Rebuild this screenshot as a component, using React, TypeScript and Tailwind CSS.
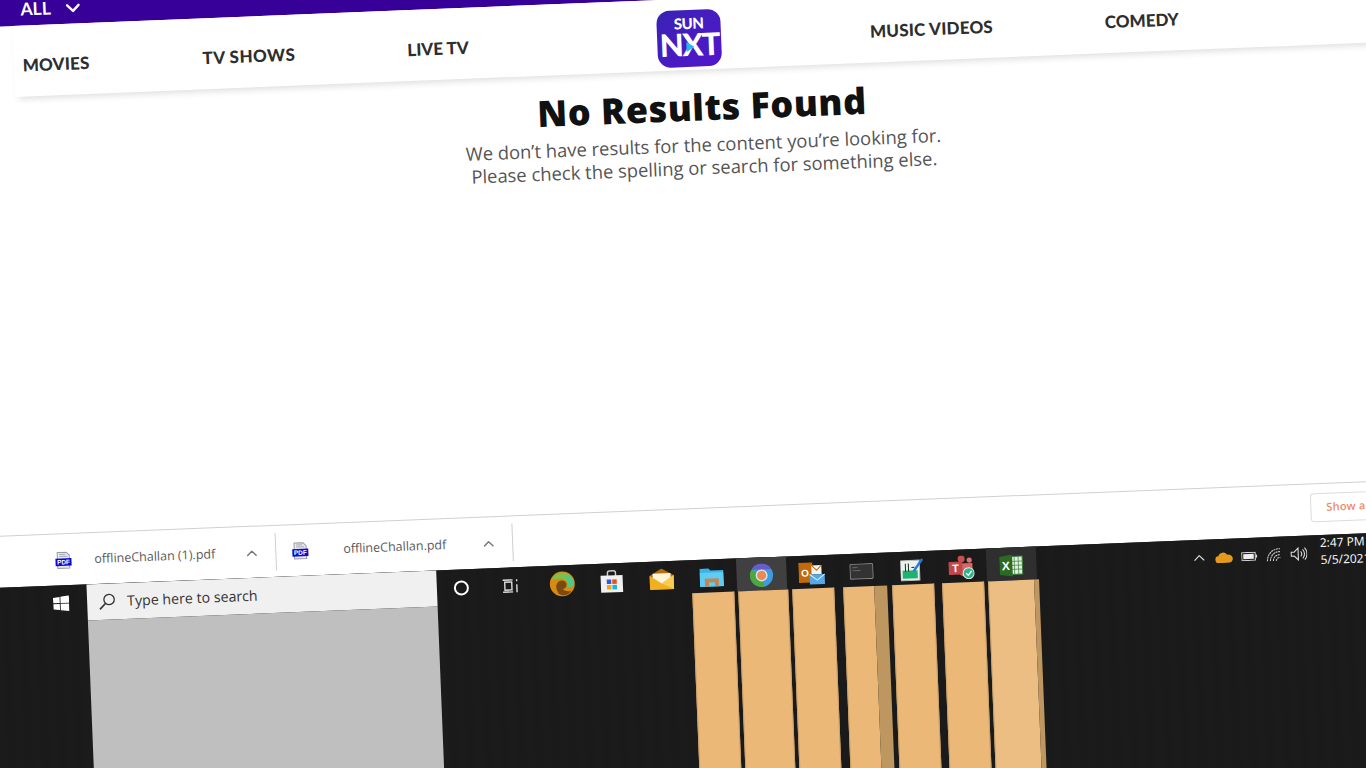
import { ChevronDown, ChevronUp } from 'lucide-react'

const lato = "font-['Lato','Liberation_Sans',sans-serif]"

function PdfIcon() {
  return (
    <svg width="18" height="18" viewBox="0 0 18 18">
      <path d="M3 1h9l3 3v13H3z" fill="#e8e8ee" stroke="#9a9aa8" />
      <path d="M5 3h6M5 5h8" stroke="#a8a8b4" />
      <rect x="1" y="7" width="16" height="7.5" fill="#0b0bd0" />
      <text x="9" y="13" textAnchor="middle" fontSize="6.4" fontWeight="700" fill="#fff" fontFamily="Liberation Sans, sans-serif">PDF</text>
    </svg>
  )
}

function DownloadItem({ name, textClass }: { name: string; textClass: string }) {
  return (
    <div className="flex items-center w-[237px] h-[38px] mt-[7px] border-r border-[#cfcfcf] shrink-0">
      <div className="ml-[15px] w-[18px] shrink-0"><PdfIcon /></div>
      <span className={`${textClass} text-[12.5px] text-[#5a5a5a] font-['Open_Sans',sans-serif] whitespace-nowrap`}>{name}</span>
      <ChevronUp size={17} strokeWidth={2} className="ml-[1px] text-[#777]" />
    </div>
  )
}

function TaskIcon({ children, active }: { children: React.ReactNode; active?: 'chrome' | 'excel' }) {
  const bg = active === 'chrome' ? 'bg-[#404040]' : active === 'excel' ? 'bg-[#2f2f2f]' : ''
  return <div className={`w-[50px] h-[33px] shrink-0 flex items-center justify-center pt-[3px] ${bg}`}>{children}</div>
}

export default function App() {
  return (
    <div className="w-[1366px] h-[768px] overflow-hidden bg-white">
      <div className="-ml-[40px] w-[1476px] h-[860px] origin-top-left rotate-[-2.29deg] flex flex-col bg-white">
        {/* site header */}
        <div className="h-[28px] bg-[#370098] flex items-center pl-[60px] pb-[4px] text-white shrink-0">
          <span className={`${lato} font-bold text-[17.5px]`}>ALL</span>
          <ChevronDown size={23} strokeWidth={2.5} className="ml-[11px]" />
        </div>
        <div className={`${lato} h-[71px] ml-[51px] pl-[9px] pt-[8px] shrink-0 flex items-center bg-white shadow-[0_6px_7px_-4px_rgba(0,0,0,0.14)] text-[#2e2e2e] font-black text-[17px] tracking-[0.2px] whitespace-nowrap`}>
          <span className="w-[180px]">MOVIES</span>
          <span className="w-[205px] tracking-[0.5px]">TV SHOWS</span>
          <span className="w-[250px] tracking-[0px]">LIVE TV</span>
          <div className="relative w-[64px] h-[57px] -mt-[1px] rounded-[13px] bg-gradient-to-br from-[#3a22b4] to-[#5214cc] flex flex-col items-center justify-center text-white leading-none overflow-hidden">
            <span className="text-[15px] font-black tracking-[-0.5px] -mb-[2px]">SUN</span>
            <span className="text-[31px] font-black tracking-[-1.5px]">NXT</span>
            <svg className="absolute left-[28px] top-[32px]" width="9" height="10" viewBox="0 0 9 10"><path d="M1 0l8 5-8 5z" fill="#22b8f0" /></svg>
          </div>
          <span className="ml-[149px] w-[235px] text-[17px]">MUSIC VIDEOS</span>
          <span className="tracking-[0px]">COMEDY</span>
        </div>

        {/* empty result */}
        <div className="h-[438px] shrink-0 pr-[2px] text-center font-['Open_Sans',sans-serif]">
          <h1 className="mt-[16px] text-[36px] leading-[44px] font-extrabold tracking-[0.5px] text-[#111]">No Results Found</h1>
          <p className="mt-[3px] text-[18.4px] leading-[23px] text-[#555]">
            We don’t have results for the content you’re looking for.<br />
            Please check the spelling or search for something else.
          </p>
        </div>

        {/* chrome downloads bar */}
        <div className="h-[52px] shrink-0 bg-white border-t border-[#d0d0d0] flex pl-[57px]">
          <DownloadItem name="offlineChallan (1).pdf" textClass="ml-[22px] w-[148px]" />
          <DownloadItem name="offlineChallan.pdf" textClass="ml-[34px] w-[136px]" />
          <div className="ml-[798px] mt-[9px] w-[120px] h-[29px] rounded-[4px] border border-[#dcdcdc] pl-[15px] flex items-center text-[11px] font-semibold tracking-[0.2px] text-[#ee8a66] font-['Open_Sans',sans-serif] whitespace-nowrap">Show all</div>
        </div>

        {/* windows taskbar */}
        <div className="flex-1 flex bg-[#1a1a1a] bg-[repeating-linear-gradient(90deg,#1a1a1a_0px,#1a1a1a_9px,#1b1b1b_9px,#1b1b1b_17px)]">
          <div className="w-[103px] shrink-0 flex justify-end pr-[18px] pt-[10px]">
            <svg width="16" height="16" viewBox="0 0 16 16" fill="#fff">
              <path d="M0 2.3L6.6 1.4V7.6H0zM7.4 1.3L16 0V7.6H7.4zM0 8.4H6.6V14.6L0 13.7zM7.4 8.4H16V16L7.4 14.7z" />
            </svg>
          </div>
          <div className="w-[350px] shrink-0 flex flex-col">
            <div className="h-[36px] bg-[#f0f0f0] flex items-center pl-[11px] pb-[1px] text-[#333]">
              <svg width="18" height="18" viewBox="0 0 18 18" fill="none" stroke="#333" strokeWidth="1.3">
                <circle cx="11" cy="7" r="5.2" />
                <path d="M7.2 10.8L1.5 16.5" strokeWidth="1.6" />
              </svg>
              <span className="ml-[11px] text-[14.2px] font-['Open_Sans',sans-serif] whitespace-nowrap">Type here to search</span>
            </div>
            <div className="flex-1 bg-[#bfbfbf]" />
          </div>
          <div className="flex-1 flex flex-col min-w-0 -ml-[1px]">
            <div className="h-[33px] flex shrink-0">
              <TaskIcon><div className="w-[15px] h-[15px] rounded-full border-[2.5px] border-white" /></TaskIcon>
              <TaskIcon>
                <svg width="18" height="15" viewBox="0 0 18 15" fill="none" stroke="#ddd" strokeWidth="1.4">
                  <path d="M1 1.5h10M1 13.5h10M3 3.5h7v8H3zM15 1v2M15 6v8" />
                </svg>
              </TaskIcon>
              <div className="w-[1px] shrink-0" />
              <TaskIcon>
                <svg width="27" height="27" viewBox="0 0 26 26">
                  <circle cx="13" cy="13" r="12" fill="#d98a12" />
                  <path d="M3 9a11 11 0 0 1 21 2c1 5-3 6-6 5 2-4-2-8-7-8-3 0-6 0-8 1z" fill="#7cc24a" />
                  <path d="M16 5a11 11 0 0 1 8 6c1 5-3 6-6 5 1-4-1-8-2-11z" fill="#4cc98a" />
                  <path d="M7 16c0-5 5-8 9-5 2 2 1 7-3 7 3 3 8 3 9 1-3 6-10 6-13 3-1-2-2-4-2-6z" fill="#7a4a10" />
                </svg>
              </TaskIcon>
              <TaskIcon>
                <svg width="24" height="24" viewBox="0 0 24 24">
                  <path d="M8 7V3.5C8 2 9 1.5 10 1.5h4c1 0 2 .5 2 2V7" fill="none" stroke="#ccc" strokeWidth="1.5" />
                  <rect x="1" y="6" width="22" height="17" fill="#f0f0f0" />
                  <rect x="7" y="10" width="4.5" height="4.5" fill="#2a5ce8" />
                  <rect x="12.5" y="10" width="4.5" height="4.5" fill="#e8501e" />
                  <rect x="7" y="15.5" width="4.5" height="4.5" fill="#f0a818" />
                  <rect x="12.5" y="15.5" width="4.5" height="4.5" fill="#18b8d8" />
                </svg>
              </TaskIcon>
              <TaskIcon>
                <svg width="26" height="22" viewBox="0 0 26 22">
                  <path d="M1 7L13 0l12 7v14H1z" fill="#b86c10" />
                  <path d="M4 5h18v6l-9 5-9-5z" fill="#fff4d8" />
                  <path d="M1 7l12 8 12-8v14H1z" fill="#f0b020" />
                  <path d="M13 15l12-8v14z" fill="#f8cc50" />
                </svg>
              </TaskIcon>
              <TaskIcon>
                <svg width="24" height="20" viewBox="0 0 24 20">
                  <path d="M0 1h9l2 2h13v16H0z" fill="#38b4e8" />
                  <path d="M0 5h24v14H0z" fill="#60ccf4" />
                  <path d="M5 19v-8h14v8h-4v-4H9v4z" fill="#c08850" />
                </svg>
              </TaskIcon>
              <TaskIcon active="chrome">
                <svg width="24" height="24" viewBox="0 0 24 24">
                  <circle cx="12" cy="12" r="11.5" fill="#3d9be0" />
                  <path d="M2 6a11.5 11.5 0 0 0 12 17.3L12 12z" fill="#4fa63a" />
                  <path d="M2 6a11.5 11.5 0 0 1 20 0H12z" fill="#6a5cc8" />
                  <circle cx="12" cy="12" r="6" fill="#d8e4f0" />
                  <circle cx="12" cy="12" r="4.6" fill="#ec8a50" />
                </svg>
              </TaskIcon>
              <TaskIcon>
                <svg width="27" height="24" viewBox="0 0 27 24">
                  <rect x="0" y="1" width="14" height="20" fill="#c26a08" />
                  <rect x="13" y="4" width="10" height="9" fill="#f4f4f4" />
                  <path d="M13 4l5 5 5-5" fill="none" stroke="#c26a08" />
                  <text x="6.5" y="15" textAnchor="middle" fontSize="10" fontWeight="700" fill="#fff" fontFamily="Liberation Sans, sans-serif">O</text>
                  <rect x="11" y="13" width="15" height="10" fill="#58a8e8" />
                  <path d="M11 13l7.5 6 7.5-6" fill="none" stroke="#d8eefc" />
                </svg>
              </TaskIcon>
              <TaskIcon>
                <svg width="24" height="16" viewBox="0 0 24 16">
                  <rect x=".5" y=".5" width="23" height="15" rx="1.5" fill="#333" stroke="#8c8c8c" />
                  <path d="M3 4h5M3 7h8" stroke="#666" />
                </svg>
              </TaskIcon>
              <TaskIcon>
                <svg width="23" height="23" viewBox="0 0 23 23">
                  <rect x="0" y="2" width="19" height="20" fill="#e8f4ec" stroke="#bbb" />
                  <path d="M2 12h15v8H2z" fill="#20b070" />
                  <path d="M5 5v8M8 5v8M11 9h3" stroke="#222" />
                  <path d="M13 13L22 1" stroke="#2878d8" strokeWidth="2.5" />
                </svg>
              </TaskIcon>
              <TaskIcon>
                <svg width="26" height="24" viewBox="0 0 26 24">
                  <circle cx="13" cy="3.5" r="3.5" fill="#c85050" />
                  <circle cx="21" cy="5" r="2.6" fill="#e07070" />
                  <path d="M10 8h14v7c0 4-4 6-8 6s-6-3-6-6z" fill="#d86868" />
                  <rect x="0" y="6" width="14" height="13" rx="1" fill="#c04848" />
                  <text x="7" y="16.5" textAnchor="middle" fontSize="11" fontWeight="700" fill="#fff" fontFamily="Liberation Sans, sans-serif">T</text>
                  <circle cx="20" cy="18" r="5.5" fill="#2fb48c" stroke="#e8e8e8" />
                  <path d="M17.5 18l2 2 3.5-4" fill="none" stroke="#fff" strokeWidth="1.4" />
                </svg>
              </TaskIcon>
              <TaskIcon active="excel">
                <svg width="24" height="22" viewBox="0 0 24 22">
                  <rect x="9" y="2" width="14" height="18" fill="#e4efe4" stroke="#3a7a3a" />
                  <path d="M15 2v18M19 2v18M9 7h14M9 11h14M9 15h14" stroke="#4a8a4a" strokeWidth=".8" />
                  <path d="M0 2L13 0v22L0 20z" fill="#2a6a22" />
                  <text x="6.5" y="15.5" textAnchor="middle" fontSize="12" fontWeight="700" fill="#fff" fontFamily="Liberation Sans, sans-serif">X</text>
                </svg>
              </TaskIcon>

              {/* tray */}
              <div className="ml-[150px] flex items-center shrink-0 pt-[3px] text-[#ddd]">
                <div className="w-[25px] flex justify-center"><ChevronUp size={18} strokeWidth={1.5} /></div>
                <div className="w-[25px] flex justify-center">
                  <svg width="18" height="11" viewBox="0 0 18 11"><path d="M3.5 11a3.5 3.5 0 0 1-.5-7A5 5 0 0 1 12 3a4 4 0 0 1 2.5 8z" fill="#e59a1c" /></svg>
                </div>
                <div className="w-[25px] flex justify-center">
                  <svg width="16" height="9" viewBox="0 0 16 9"><rect x=".5" y=".5" width="13.5" height="8" fill="none" stroke="#ddd" /><rect x="2" y="2" width="10.5" height="5" fill="#eee" /><rect x="14.5" y="3" width="1.5" height="3" fill="#ddd" /></svg>
                </div>
                <div className="w-[25px] flex justify-center">
                  <svg width="15" height="14" viewBox="0 0 15 14" fill="none" stroke="#ccc" strokeWidth="1.1" strokeDasharray="2 .6">
                    <path d="M1 13A12 12 0 0 1 14 1M4 13a9 9 0 0 1 10-9M7 13a6 6 0 0 1 7-6M10 13a3 3 0 0 1 4-3" />
                  </svg>
                </div>
                <div className="w-[24px] flex justify-center">
                  <svg width="17" height="14" viewBox="0 0 17 14" fill="none" stroke="#ddd" strokeWidth="1.1">
                    <path d="M1 5h3l4-4v12L4 9H1zM10.5 4.5a3.5 3.5 0 0 1 0 5M12.5 2.5a6.5 6.5 0 0 1 0 9M14.5 1a9 9 0 0 1 0 12" />
                  </svg>
                </div>
                <div className="ml-[10px] -mt-[3px] text-[12px] leading-[16.5px] text-white font-['Open_Sans',sans-serif] whitespace-nowrap">
                  2:47 PM<br />5/5/2021
                </div>
              </div>
            </div>

            {/* window thumbnails */}
            <div className="flex flex-1 ml-[255.5px]">
              <div className="w-[42px] bg-[#ecb877] border-x border-[#c9a26e] shrink-0" />
              <div className="ml-[4px] w-[50px] bg-[#ecb877] border-x border-[#c9a26e] shrink-0" />
              <div className="ml-[4px] w-[42px] bg-[#ecb877] border-x border-[#c9a26e] shrink-0" />
              <div className="ml-[9px] w-[31px] bg-[#ecb877] border-l border-[#c9a26e] shrink-0" />
              <div className="w-[13px] bg-[#bd9660] shrink-0" />
              <div className="ml-[5px] w-[42px] bg-[#ecb877] border-x border-[#c9a26e] shrink-0" />
              <div className="ml-[8px] w-[42px] bg-[#ecb877] border-x border-[#c9a26e] shrink-0" />
              <div className="ml-[4px] w-[46px] bg-[#edbe84] border-l border-[#c9a26e] shrink-0" />
              <div className="w-[5px] bg-[#bd9660] shrink-0" />
            </div>
          </div>
        </div>
      </div>
    </div>
  )
}
